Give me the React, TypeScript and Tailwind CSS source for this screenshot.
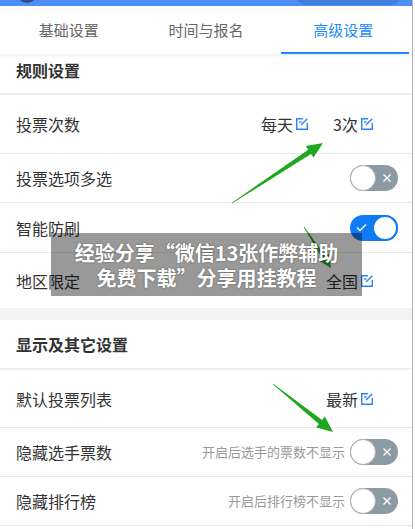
import React from "react";

const FONT = "font-['Noto_Sans_CJK_SC','Noto_Sans',sans-serif]";

function EditIcon() {
  return (
    <svg width="14" height="14" viewBox="0 0 14 14" fill="none" stroke="#2a84f5" strokeWidth="1.4" className="ml-[2px] shrink-0">
      <path d="M8 1.7H1.7v10.6h10.6V6" />
      <path d="M4 5h2.5" />
      <path d="M6 8L12.3 1.7" />
    </svg>
  );
}

function Toggle({ on }: { on: boolean }) {
  if (on) {
    return (
      <div className="flex h-[26px] w-[48px] items-center rounded-full bg-[#0f7cf6]">
        <div className="flex flex-1 items-center justify-center">
          <svg width="11" height="9" viewBox="0 0 11 9" fill="none" stroke="#fff" strokeWidth="1.4">
            <path d="M1 4.5l3 3L10 1.5" />
          </svg>
        </div>
        <div className="h-[26px] w-[26px] rounded-full border-2 border-[#0f7cf6] bg-white" />
      </div>
    );
  }
  return (
    <div className="flex h-[26px] w-[48px] items-center rounded-full bg-[#8c9aa3]">
      <div className="h-[26px] w-[26px] rounded-full border border-[#a9b3ba] bg-white" />
      <div className="flex flex-1 items-center justify-center">
        <svg width="10" height="10" viewBox="0 0 10 10" fill="none" stroke="#fff" strokeWidth="1.4">
          <path d="M1.5 1.5l7 7M8.5 1.5l-7 7" />
        </svg>
      </div>
    </div>
  );
}

function Row({
  label,
  h,
  border = true,
  children,
  pr = "pr-[14px]",
}: {
  label: string;
  h: string;
  border?: boolean;
  children?: React.ReactNode;
  pr?: string;
}) {
  return (
    <div className={`flex items-center justify-between pl-4 ${pr} ${h} ${border ? "border-b border-[#e9e9e9]" : ""}`}>
      <span className="text-[16px] text-[#333]">{label}</span>
      <div className="flex items-center">{children}</div>
    </div>
  );
}

function Value({ text }: { text: string }) {
  return (
    <span className="flex items-center text-[16px] text-[#333]">
      {text}
      <EditIcon />
    </span>
  );
}

export default function App() {
  return (
    <div className={`relative h-[529px] w-[415px] overflow-hidden bg-white ${FONT}`}>
      <div className="flex h-full">
        <div className="w-[412px]">
          {/* top app bar, scrolled mostly out of view */}
          <div className="flex h-[6px] items-end overflow-hidden bg-[#4e8ef6] pl-4 pr-[8px]">
            <div className="mb-[3px] h-[22px] w-[22px] rounded-full bg-[#2f4f86]" />
            <div className="mb-[1px] ml-auto h-[30px] w-[111px] rounded-full bg-[#417fdb]" />
          </div>

          {/* tabs */}
          <div className="relative z-10 flex h-[48px] bg-white shadow-[0_2px_3px_rgba(0,0,0,0.06)]">
            <div className="flex flex-1 items-center justify-center text-[15px] text-[#666]">基础设置</div>
            <div className="flex flex-1 items-center justify-center text-[15px] text-[#666]">时间与报名</div>
            <div className="relative flex flex-1 items-center justify-center text-[15px] text-[#1a8cff]">
              高级设置
              <div className="absolute bottom-0 left-[6px] right-[3px] h-[2px] bg-[#1a8cff]" />
            </div>
          </div>

          {/* rules */}
          <div className="flex h-[41px] items-center border-b-2 border-[#eeeeee] pb-[8px] pl-4">
            <span className="text-[16px] font-bold text-[#333]">规则设置</span>
          </div>
          <Row label="投票次数" h="h-[59px]" pr="pr-[38px]">
            <Value text="每天" />
            <span className="ml-[24px]">
              <Value text="3次" />
            </span>
          </Row>
          <Row label="投票选项多选" h="h-[49px]">
            <Toggle on={false} />
          </Row>
          <Row label="智能防刷" h="h-[50px]">
            <Toggle on />
          </Row>
          <Row label="地区限定" h="h-[55px]" border={false} pr="pr-[38px]">
            <Value text="全国" />
          </Row>

          <div className="h-[12px] bg-[#f3f3f3]" />

          {/* display & others */}
          <div className="flex h-[50px] items-center border-b-2 border-[#eeeeee] pl-4">
            <span className="text-[16px] font-bold text-[#333]">显示及其它设置</span>
          </div>
          <Row label="默认投票列表" h="h-[58px]" pr="pr-[38px]">
            <Value text="最新" />
          </Row>
          <Row label="隐藏选手票数" h="h-[49px]">
            <span className="mr-[5px] text-[13px] text-[#999]">开启后选手的票数不显示</span>
            <Toggle on={false} />
          </Row>
          <Row label="隐藏排行榜" h="h-[49px]">
            <span className="mr-[5px] text-[13px] text-[#999]">开启后排行榜不显示</span>
            <Toggle on={false} />
          </Row>
        </div>
        <div className="w-px bg-[#b3b3b3]" />
      </div>

      {/* annotation arrows */}
      <svg className="pointer-events-none absolute left-0 top-0" width="415" height="529">
        <polygon
          fill="#1fa81f"
          points="232.2,203.3 311,153.9 313.5,157.6 323,143 305.8,146 308.2,149.7 231.8,202.7"
        />
        <polygon
          fill="#1fa81f"
          points="303.75,227.17 322.1,258.2 318.8,260.4 331,268 328.8,253.8 325.5,256 304.25,226.83"
        />
        <polygon
          fill="#1fa81f"
          points="272.75,384.3 318.9,424 316.1,427.5 333,432 324.9,416.5 322.1,420 273.25,383.7"
        />
      </svg>

      {/* caption banner */}
      <div className="absolute left-[51px] top-[233px] flex h-[63px] w-[311px] flex-col items-center justify-center bg-black/40 text-[20px] font-bold leading-[25px] text-white [text-shadow:0_0_2px_rgba(0,0,0,0.45)]">
        <span>经验分享“微信13张作弊辅助</span>
        <span>免费下载”分享用挂教程</span>
      </div>
    </div>
  );
}
